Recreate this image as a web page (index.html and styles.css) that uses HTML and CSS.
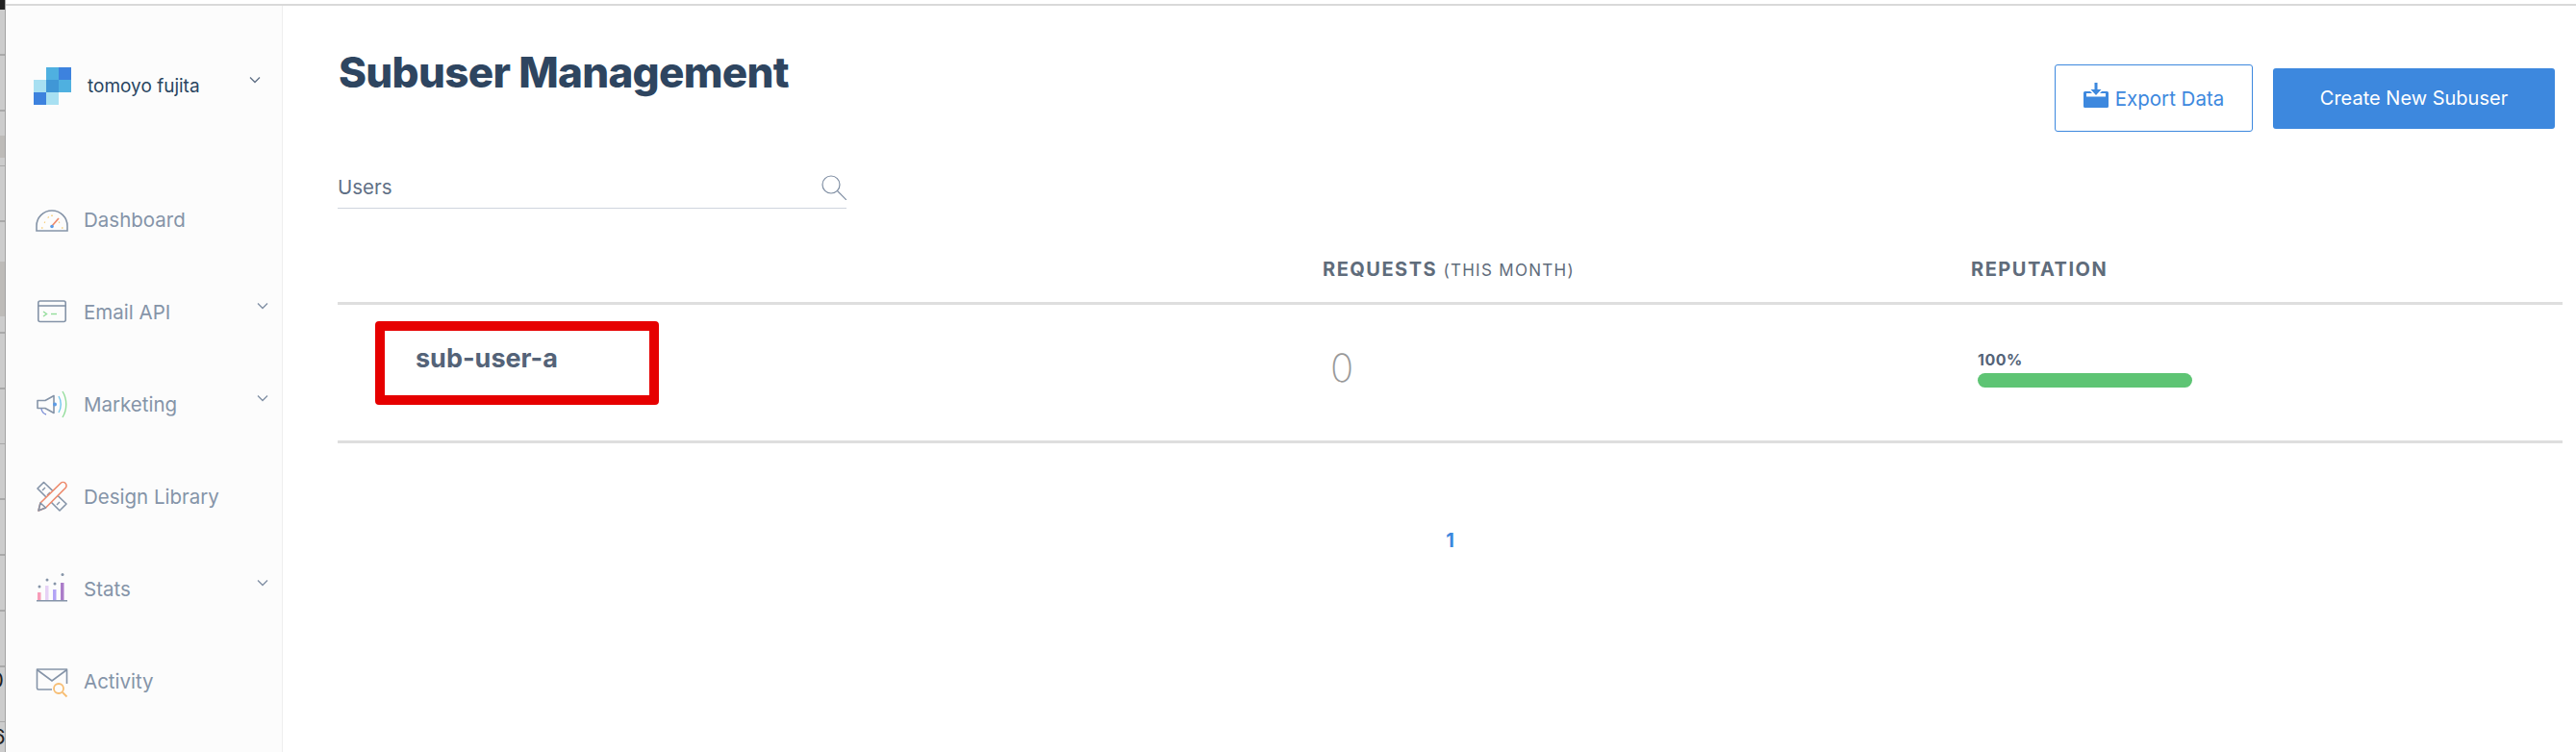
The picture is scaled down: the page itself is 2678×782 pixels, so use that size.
FILE: index.html
```html
<!DOCTYPE html>
<html lang="en">
<head>
    <meta charset="UTF-8">
    <title>Subuser Management</title>
    <link rel="stylesheet" href="styles.css">
</head>
<body>

<div class="page">
    <!-- bit of the window behind, cut off at the left edge -->
    <div class="behind">
        <span class="behind-top"></span>
        <span class="behind-zero">0</span>
        <span class="behind-six">6</span>
    </div>

    <div class="app">
        <div class="topline"></div>
        <div class="columns">
            <aside class="sidebar">
                <div class="account">
                    <svg class="logo" viewBox="0 0 39 39">
                        <rect x="13" y="0" width="13" height="13" fill="#4fb0e0"/>
                        <rect x="26" y="0" width="13" height="13" fill="#3d82de"/>
                        <rect x="0" y="13" width="13" height="13" fill="#a8e0f2"/>
                        <rect x="13" y="13" width="13" height="13" fill="#4097d6"/>
                        <rect x="26" y="13" width="13" height="13" fill="#4fb0e0"/>
                        <rect x="0" y="26" width="13" height="13" fill="#3d82de"/>
                        <rect x="13" y="26" width="13" height="13" fill="#a8e0f2"/>
                    </svg>
                    <span class="account-name">tomoyo fujita</span>
                    <svg class="chevron account-chevron" viewBox="0 0 12 8"><path d="M1 1.5l5 5 5-5"/></svg>
                </div>

                <ul class="nav">
                    <li class="nav-item">
                        <svg class="nav-icon" viewBox="0 0 36 36" fill="none">
                            <path d="M2 30v-5a16 16 0 0 1 32 0v5z" stroke="#8594a8" stroke-width="1.6"/>
                            <path d="M10 21l1 .5M14 15.500l.6 1M18 13.500v1.500M26 21l-1 .5M7 27h1.500M28 27h1.500" stroke="#f6cf7e" stroke-width="1.600"/>
                            <path d="M18 25l7-8" stroke="#ee8a6c" stroke-width="1.600"/>
                            <circle cx="18" cy="25.500" r="1.800" fill="#5c9be6"/>
                        </svg>
                        <span>Dashboard</span>
                    </li>
                    <li class="nav-item">
                        <svg class="nav-icon" viewBox="0 0 36 36" fill="none">
                            <rect x="3.800" y="7" width="28.400" height="21.500" rx="2" stroke="#8594a8" stroke-width="1.600"/>
                            <path d="M3.800 12h28.400" stroke="#8594a8" stroke-width="1.600"/>
                            <path d="M9 18l3.500 2.500L9 23" stroke="#93dd9b" stroke-width="1.400"/>
                            <path d="M17 20.500h6" stroke="#93dd9b" stroke-width="1.400"/>
                        </svg>
                        <span>Email API</span>
                        <svg class="chevron" viewBox="0 0 12 8"><path d="M1 1.500l5 5 5-5"/></svg>
                    </li>
                    <li class="nav-item">
                        <svg class="nav-icon" viewBox="0 0 36 36" fill="none">
                            <path d="M3 14.500h8l9-5v18l-9-5H3z" stroke="#8594a8" stroke-width="1.600" stroke-linejoin="round"/>
                            <path d="M7 23c.5 3 2 5 5 6" stroke="#7c8fd6" stroke-width="1.400"/>
                            <circle cx="21" cy="18.500" r="2" fill="#5c9be6"/>
                            <path d="M25 10c3 5 3 12 0 17" stroke="#72c6ee" stroke-width="1.400"/>
                            <path d="M29 5c5 8 5 19 0 27" stroke="#93dd9b" stroke-width="1.400"/>
                        </svg>
                        <span>Marketing</span>
                        <svg class="chevron" viewBox="0 0 12 8"><path d="M1 1.500l5 5 5-5"/></svg>
                    </li>
                    <li class="nav-item">
                        <svg class="nav-icon" viewBox="0 0 36 36" fill="none">
                            <path d="M9.500 3.500L3 10l23 23 7-7z" stroke="#8594a8" stroke-width="1.600" fill="#fcfcfc" stroke-linejoin="round"/>
                            <path d="M11 9l-3 3M16 14l-3 3M21 19l-3 3M26 24l-3 3" stroke="#8594a8" stroke-width="1.400"/>
                            <path d="M4 33l2-8L27 4.500a3.500 3.500 0 0 1 5 5L11.500 30z" stroke="#ee8a6c" stroke-width="1.600" fill="#fcfcfc" stroke-linejoin="round"/>
                            <path d="M4 33l2-8 5.500 5z" stroke="#8594a8" stroke-width="1.600" stroke-linejoin="round"/>
                        </svg>
                        <span>Design Library</span>
                    </li>
                    <li class="nav-item">
                        <svg class="nav-icon" viewBox="0 0 36 36">
                            <rect x="3" y="22" width="3.500" height="8" fill="#f79cb8"/>
                            <rect x="11" y="15" width="3.500" height="15" fill="#e6d2f5"/>
                            <rect x="19" y="19" width="3.500" height="11" fill="#b3a4f5"/>
                            <rect x="27" y="12" width="3.500" height="18" fill="#ab7cc9"/>
                            <rect x="2" y="30" width="32" height="1.500" fill="#8594a8"/>
                            <circle cx="5" cy="16" r="1.500" fill="#8594a8"/>
                            <circle cx="13" cy="9" r="1.500" fill="#8594a8"/>
                            <circle cx="21" cy="13" r="1.500" fill="#8594a8"/>
                            <circle cx="29" cy="3.500" r="1.500" fill="#8594a8"/>
                        </svg>
                        <span>Stats</span>
                        <svg class="chevron" viewBox="0 0 12 8"><path d="M1 1.500l5 5 5-5"/></svg>
                    </li>
                    <li class="nav-item">
                        <svg class="nav-icon" viewBox="0 0 36 36" fill="none">
                            <path d="M18 27H4a1.500 1.500 0 0 1-1.500-1.500V6h31v15" stroke="#8594a8" stroke-width="1.600" stroke-linejoin="round"/>
                            <path d="M2.500 6.500L18 18 33.500 6.500" stroke="#8594a8" stroke-width="1.600"/>
                            <circle cx="25" cy="26" r="5" stroke="#f7bd72" stroke-width="1.800"/>
                            <path d="M29 30l4.500 4.500" stroke="#f7bd72" stroke-width="1.800"/>
                        </svg>
                        <span>Activity</span>
                    </li>
                </ul>
            </aside>

            <main class="content">
                <div class="content-head">
                    <h1 class="title">Subuser Management</h1>
                    <div class="actions">
                        <button class="btn btn-outline">
                            <svg class="export-icon" viewBox="0 0 26 26">
                                <path d="M11.500 0h3v7h4l-5.500 6-5.500-6h4z" fill="#3d88de"/>
                                <path d="M1.500 9H7l2 2H3v3.500h20V11h-6l2-2h5.500A1.500 1.500 0 0 1 26 10.500v14a1.500 1.500 0 0 1-1.500 1.500h-23A1.500 1.500 0 0 1 0 24.500v-14A1.500 1.500 0 0 1 1.500 9z" fill="#3d88de"/>
                            </svg>
                            Export Data
                        </button>
                        <button class="btn btn-primary">Create New Subuser</button>
                    </div>
                </div>

                <div class="search">
                    <span class="search-label">Users</span>
                    <svg class="search-icon" viewBox="0 0 26 26" fill="none">
                        <circle cx="10" cy="10" r="9" stroke="#7f8ea3" stroke-width="1.200"/>
                        <path d="M16.500 16.500L26 26" stroke="#7f8ea3" stroke-width="1.200"/>
                    </svg>
                </div>

                <div class="table-head">
                    <div></div>
                    <div class="col-label">REQUESTS <span class="col-note">(THIS MONTH)</span></div>
                    <div class="col-label">REPUTATION</div>
                </div>

                <div class="table-row">
                    <div class="user-cell">
                        <span class="user-name">sub-user-a</span>
                        <span class="marker"></span>
                    </div>
                    <div class="requests">0</div>
                    <div class="reputation">
                        <div class="rep-value">100%</div>
                        <div class="rep-bar"></div>
                    </div>
                </div>

                <div class="pager">1</div>
            </main>
        </div>
    </div>
</div>

</body>
</html>
```

FILE: styles.css
```css
html, body {
    margin: 0;
    padding: 0;
    height: 100%;
    background-color: white;
    font-family: Inter, "Liberation Sans", sans-serif;
    overflow: hidden;
}
.page {
    display: flex;
    height: 782px;
}

/* window behind */
.behind {
    position: relative;
    width: 6px;
    flex: none;
    overflow: hidden;
    background-color: #cccccc;
    background-image:
        linear-gradient(#bdbbb8, #bdbbb8),
        linear-gradient(#bdbbb8, #bdbbb8),
        repeating-linear-gradient(to bottom, transparent 0, transparent 56px, #a9a9a9 56px, #a9a9a9 57.800px);
    background-size: 100% 23px, 100% 57px, 100% 100%;
    background-position: 0 141px, 0 272px, 0 0;
    background-repeat: no-repeat;
    border-right: 1px solid #a3a3a3;
    box-sizing: border-box;
}
.behind-top {
    position: absolute;
    left: 0;
    top: 0;
    width: 5px;
    height: 10px;
    background-color: #222;
}
.behind-zero, .behind-six {
    position: absolute;
    font-size: 22px;
    line-height: 22px;
    color: #222;
}
.behind-zero {
    top: 696px;
    left: -10px;
}
.behind-six {
    top: 755px;
    left: -8px;
}

.app {
    flex: 1;
    display: flex;
    flex-direction: column;
    padding-top: 4px;
    min-width: 0;
}
.topline {
    height: 2px;
    background-color: #d9d9d9;
    flex: none;
}
.columns {
    flex: 1;
    display: flex;
    min-height: 0;
}

/* sidebar */
.sidebar {
    width: 288px;
    flex: none;
    box-sizing: border-box;
    background-color: #fcfcfc;
    border-right: 1px solid #eeeeee;
}
.account {
    display: flex;
    align-items: center;
    height: 39px;
    margin-top: 64px;
    padding-left: 29px;
}
.logo {
    width: 39px;
    height: 39px;
    flex: none;
}
.account-name {
    margin-left: 17px;
    font-size: 19px;
    color: #294661;
}
.chevron {
    width: 12px;
    height: 8px;
    fill: none;
    stroke: #7f8ea3;
    stroke-width: 1.300;
    margin-left: auto;
    margin-right: 14px;
    margin-bottom: 12px;
}
.account-chevron {
    margin-right: 22px;
    stroke: #5f6f85;
    margin-bottom: 14px;
}
.nav {
    list-style: none;
    margin: 71px 0 0 0;
    padding: 0;
}
.nav-item {
    display: flex;
    align-items: center;
    height: 96px;
    padding-left: 30px;
    font-size: 20.500px;
    color: #8594a8;
}
.nav-icon {
    width: 36px;
    height: 36px;
    flex: none;
    margin-right: 15px;
}

/* main */
.content {
    flex: 1;
    min-width: 0;
    padding: 0 14px 0 57px;
}
.content-head {
    display: flex;
    justify-content: space-between;
    align-items: flex-start;
}
.title {
    margin: 41px 0 0 1px;
    font-size: 44px;
    line-height: 56px;
    font-weight: 800;
    letter-spacing: -0.700px;
    color: #2e4560;
}
.actions {
    display: flex;
    align-items: center;
    gap: 21px;
    margin-top: 61px;
    margin-right: 8px;
}
.btn {
    font-family: inherit;
    font-size: 20px;
    border-radius: 3px;
    box-sizing: border-box;
}
.btn-outline {
    display: flex;
    align-items: center;
    justify-content: center;
    gap: 7px;
    width: 206px;
    height: 70px;
    font-size: 20.500px;
    background-color: white;
    color: #3d88de;
    border: 1px solid #3d88de;
}
.export-icon {
    width: 26px;
    height: 26px;
    margin-bottom: 6px;
}
.btn-primary {
    width: 293px;
    height: 63px;
    background-color: #3d88de;
    color: white;
    border: none;
}
.search {
    display: flex;
    justify-content: space-between;
    align-items: center;
    width: 529px;
    height: 45px;
    margin-top: 35px;
    border-bottom: 1px solid #cfd5de;
    padding-top: 1px;
    box-sizing: border-box;
}
.search-label {
    font-size: 20.500px;
    color: #5f6f85;
}
.search-icon {
    width: 26px;
    height: 26px;
}
.table-head {
    display: grid;
    grid-template-columns: 1024px 674px 1fr;
    height: 100px;
    box-sizing: border-box;
    padding-top: 51px;
    border-bottom: 3px solid #dedede;
}
.col-label {
    font-size: 20px;
    line-height: 24px;
    font-weight: 700;
    letter-spacing: 1.500px;
    color: #5f6c7b;
}
.col-note {
    font-size: 17px;
    font-weight: 400;
    letter-spacing: 1.300px;
}
.table-row {
    display: grid;
    grid-template-columns: 1024px 674px 1fr;
    height: 144px;
    box-sizing: border-box;
    border-bottom: 3px solid #dedede;
}
.user-cell {
    position: relative;
    padding: 38px 0 0 81px;
}
.user-name {
    font-size: 27px;
    line-height: 36px;
    font-weight: 700;
    color: #546378;
}
/* red box someone drew on the screenshot */
.marker {
    position: absolute;
    left: 39px;
    top: 17px;
    width: 275px;
    height: 67px;
    border: 10px solid #e60000;
    border-radius: 4px;
}
.requests {
    padding: 41px 0 0 8px;
    font-size: 40px;
    line-height: 50px;
    font-weight: 200;
    color: #999999;
}
.reputation {
    padding: 49px 0 0 7px;
}
.rep-value {
    font-size: 16px;
    line-height: 16px;
    font-weight: 700;
    letter-spacing: 0.500px;
    color: #546378;
}
.rep-bar {
    width: 223px;
    height: 15px;
    margin-top: 6px;
    background-color: #5ec474;
    border-radius: 8px;
}
.pager {
    margin-top: 89px;
    text-align: center;
    font-size: 20px;
    line-height: 24px;
    font-weight: 700;
    color: #3d88de;
}
```
